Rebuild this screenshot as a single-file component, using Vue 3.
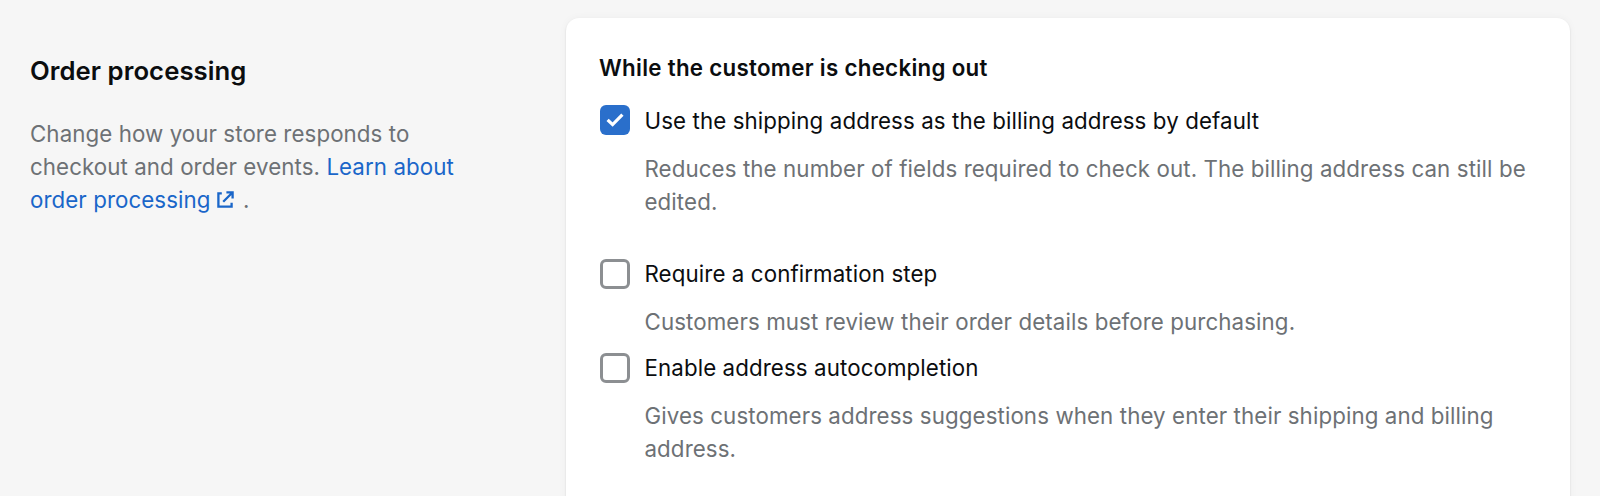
<script setup>
import { ref } from 'vue'

const options = ref([
  {
    id: 'billing',
    checked: true,
    label: 'Use the shipping address as the billing address by default',
    help: ['Reduces the number of fields required to check out. The billing address can still be', 'edited.'],
  },
  {
    id: 'confirmation',
    checked: false,
    label: 'Require a confirmation step',
    help: ['Customers must review their order details before purchasing.'],
  },
  {
    id: 'autocomplete',
    checked: false,
    label: 'Enable address autocompletion',
    help: ['Gives customers address suggestions when they enter their shipping and billing', 'address.'],
  },
])
</script>

<template>
  <main class="page">
    <aside class="intro">
      <h2 class="title">Order processing</h2>
      <p class="description">
        Change how your store responds to<br />
        checkout and order events. <a class="link">Learn about<br />order processing<svg class="external" viewBox="0 0 17 17" aria-hidden="true">
          <path d="M4.8 2.4H1.4v13.2h13.2V11.8" />
          <path d="M9.4 1.4h6.2v6.2M15.2 1.8L6.2 10.8" />
        </svg></a><span class="stop">.</span>
      </p>
    </aside>
    <section class="card">
      <h3 class="heading">While the customer is checking out</h3>
      <div v-for="o in options" :key="o.id" class="option" :class="o.id">
        <span class="box" :class="{ checked: o.checked }" @click="o.checked = !o.checked">
          <svg v-if="o.checked" viewBox="0 0 30 30" aria-hidden="true">
            <path d="M7.6 14.8l5 4.8L22.4 9.6" />
          </svg>
        </span>
        <span class="label">{{ o.label }}</span>
        <p class="help"><span v-for="line in o.help" :key="line" class="line">{{ line }}</span></p>
      </div>
    </section>
  </main>
</template>

<style>
body {
  background: #f6f6f6;
}
</style>

<style scoped>
.page {
  display: flex;
  box-sizing: border-box;
  width: 1600px;
  height: 496px;
  padding: 18px 30px 0;
  overflow: hidden;
  background: #f6f6f6;
  color: #0b0d0f;
  font-family: Inter, "Liberation Sans", sans-serif;
  font-size: 22.3px;
  line-height: 33px;
  letter-spacing: 0.1px;
}
.intro {
  width: 536px;
  flex: none;
  padding-top: 35px;
}
.title {
  margin: 0;
  font-size: 25.7px;
  font-weight: 600;
  line-height: 35px;
  letter-spacing: 0.06px;
}
.description {
  margin: 29px 0 0;
  color: #6d7175;
  white-space: nowrap;
  letter-spacing: 0.08px;
}
.link {
  color: #1a66c9;
}
.external {
  width: 17px;
  height: 17px;
  margin-left: 6.5px;
  fill: none;
  stroke: currentColor;
  stroke-width: 2.3;
}
.stop {
  margin-left: 9px;
}
.card {
  box-sizing: border-box;
  width: 1004px;
  height: 520px;
  flex: none;
  padding: 33px 34px 0;
  background: #fff;
  border-radius: 13px;
  box-shadow: 0 0 8px rgba(23, 24, 24, 0.04), 0 1px 2px rgba(0, 0, 0, 0.13);
}
.heading {
  margin: 0 0 20px -1px;
  font-size: 22.3px;
  font-weight: 600;
  line-height: 33px;
  letter-spacing: 0.3px;
}
.option {
  display: grid;
  grid-template-columns: 30px auto;
  column-gap: 14.5px;
  align-items: start;
  white-space: nowrap;
}
.confirmation {
  margin-top: 39px;
}
.autocomplete {
  margin-top: 13px;
}
.box {
  box-sizing: border-box;
  width: 30px;
  height: 30px;
  margin-top: 2px;
  border: 3px solid #8c8f92;
  border-radius: 6px;
}
.billing .box {
  margin-top: 1px;
}
.box.checked {
  border: 0;
  background: #2a6fcb;
}
.box svg {
  display: block;
  width: 30px;
  height: 30px;
  fill: none;
  stroke: #fff;
  stroke-width: 3.2;
}
.help {
  grid-column: 2;
  margin: 15px 0 0;
  color: #6d7175;
}
.line {
  display: block;
}
</style>
